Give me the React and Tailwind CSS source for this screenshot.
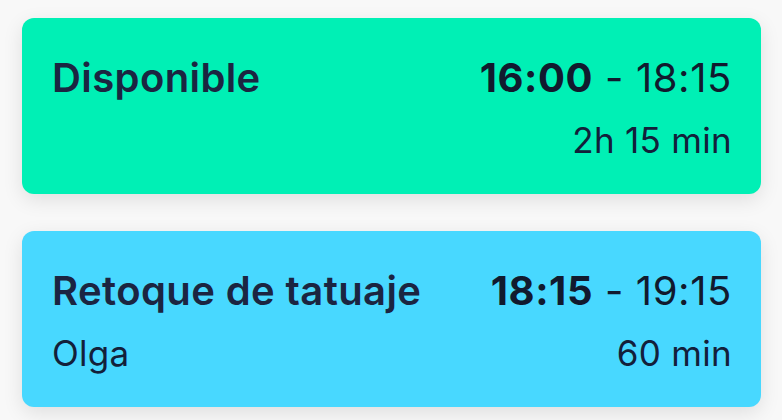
import React from 'react'

const slots = [
  { title: 'Disponible', start: '16:00', end: '18:15', client: '', duration: '2h 15 min', color: 'bg-[#00f0b5]' },
  { title: 'Retoque de tatuaje', start: '18:15', end: '19:15', client: 'Olga', duration: '60 min', color: 'bg-[#48d8ff]' },
]

function SlotCard({ slot }) {
  return (
    <div className={`${slot.color} rounded-[12px] h-[176px] pl-[30px] pr-[29px] pt-[36px] shadow-[0_6px_20px_rgba(0,0,0,0.10)]`}>
      <div className="flex items-baseline justify-between">
        <span className="text-[40px] leading-[48px] tracking-[0.4px] font-semibold text-[#1b2541]">{slot.title}</span>
        <span className="text-[40px] leading-[48px] tracking-[0.6px] text-[#111a2e]">
          <span className="font-bold">{slot.start}</span> - {slot.end}
        </span>
      </div>
      <div className="flex items-baseline justify-between mt-[18px]">
        <span className="text-[35px] leading-[40px] tracking-[0.3px] text-[#13203a]">{slot.client}</span>
        <span className="text-[35px] leading-[40px] tracking-[0.3px] text-[#13203a]">{slot.duration}</span>
      </div>
    </div>
  )
}

export default function App() {
  return (
    <div className="w-[782px] h-[420px] overflow-hidden bg-[#f8f8f8] font-['Inter',sans-serif]">
      <div className="flex flex-col gap-[37px] pt-[18px] pl-[22px] pr-[21px]">
        {slots.map(slot => (
          <SlotCard key={slot.start} slot={slot} />
        ))}
      </div>
    </div>
  )
}
